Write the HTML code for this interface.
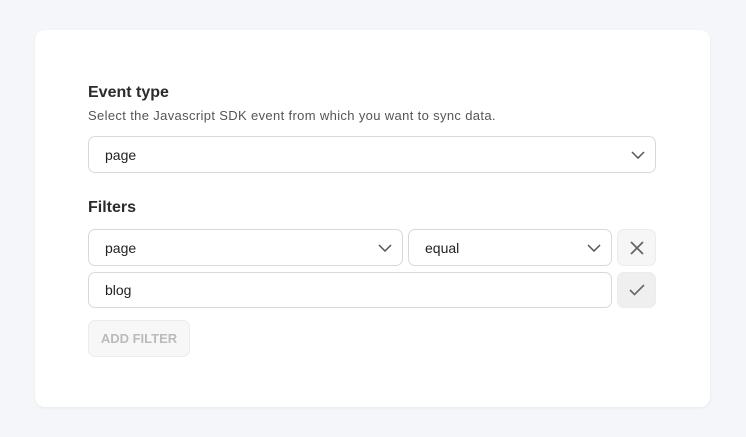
<!DOCTYPE html><html><head><style>
body{margin:0;width:746px;height:437px;background:#f5f6f9;font-family:"Liberation Sans",sans-serif;position:relative;overflow:hidden}
.card{position:absolute;left:35px;top:30px;width:675px;height:377px;background:#fff;border-radius:10px;box-shadow:0 1px 3px rgba(0,0,0,.06)}
.a{position:absolute}
.h{font-weight:bold;font-size:16px;color:#2b2b2b}
.s{font-size:13px;letter-spacing:0.35px;color:#555}
.box{position:absolute;border:1px solid #d9d9d9;border-radius:7px;box-sizing:border-box;font-size:14px;color:#222;padding-left:16px;display:flex;align-items:center;background:#fff}
.chev{position:absolute;right:10px;top:50%;margin-top:-4px}
.btn{position:absolute;background:#f3f3f3;border:1px solid #ececec;border-radius:7px;box-sizing:border-box;display:flex;align-items:center;justify-content:center}
</style></head><body>
<div class="card"></div>
<div class="a h" style="left:88px;top:84px">Event type</div>
<div class="a s" style="left:88px;top:108px">Select the Javascript SDK event from which you want to sync data.</div>
<div class="box" style="left:88px;top:136px;width:568px;height:37px">page<svg class="chev" width="14" height="8" viewBox="0 0 14 8"><path d="M1 1l6 6 6-6" fill="none" stroke="#555" stroke-width="1.5"/></svg></div>
<div class="a h" style="left:88px;top:199px">Filters</div>
<div class="box" style="left:88px;top:229px;width:315px;height:37px">page<svg class="chev" width="14" height="8" viewBox="0 0 14 8"><path d="M1 1l6 6 6-6" fill="none" stroke="#555" stroke-width="1.5"/></svg></div>
<div class="box" style="left:408px;top:229px;width:204px;height:37px">equal<svg class="chev" width="14" height="8" viewBox="0 0 14 8"><path d="M1 1l6 6 6-6" fill="none" stroke="#555" stroke-width="1.5"/></svg></div>
<div class="btn" style="left:617px;top:229px;width:39px;height:37px;background:#f6f6f6"><svg width="14" height="14" viewBox="0 0 14 14"><path d="M1 1l12 12M13 1L1 13" stroke="#666" stroke-width="1.8"/></svg></div>
<div class="box" style="left:88px;top:272px;width:524px;height:36px">blog</div>
<div class="btn" style="left:617px;top:272px;width:39px;height:36px;background:#efefef"><svg width="16" height="12" viewBox="0 0 16 12"><path d="M1 6l4.5 4.5L15 1" fill="none" stroke="#666" stroke-width="1.6"/></svg></div>
<div class="btn" style="left:88px;top:320px;width:102px;height:37px;background:#f7f7f7;font-size:13px;font-weight:bold;color:#bbb">ADD FILTER</div>
</body></html>
